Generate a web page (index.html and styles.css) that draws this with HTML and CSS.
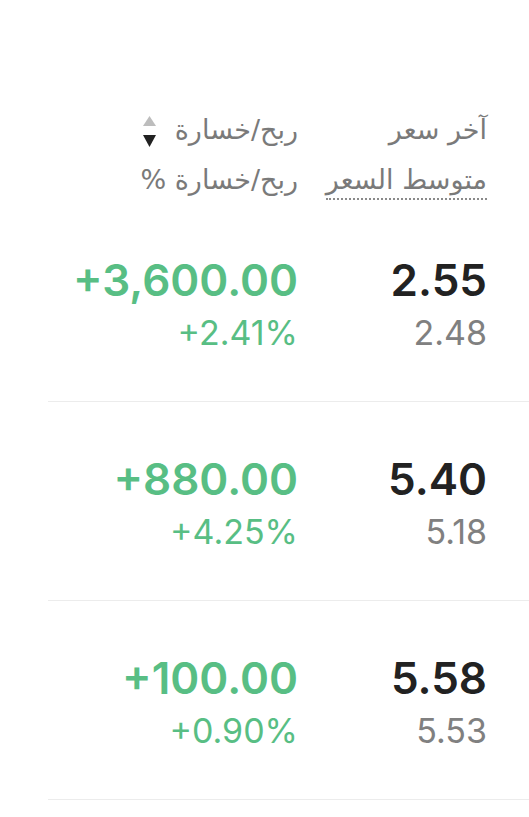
FILE: index.html
```html
<!DOCTYPE html>
<html lang="ar" dir="rtl">
<head>
    <meta charset="UTF-8">
    <meta name="viewport" content="width=device-width, initial-scale=1.0">
    <title>المحفظة</title>
    <link rel="stylesheet" href="styles.css">
</head>
<body>
    <div class="holdings">
        <div class="head">
            <div class="col price-col">
                <div class="label">آخر سعر</div>
                <div class="label"><span class="dotted">متوسط السعر</span></div>
            </div>
            <div class="col pl-col">
                <div class="label">
                    ربح/خسارة
                    <span class="sort">
                        <svg width="13" height="32" viewBox="0 0 13 32">
                            <path d="M6.5 0 L13 10 L0 10 Z" fill="#bdbdbd"/>
                            <path d="M0 19 L13 19 L6.5 31 Z" fill="#222"/>
                        </svg>
                    </span>
                </div>
                <div class="label">ربح/خسارة %</div>
            </div>
        </div>

        <div class="row">
            <div class="col price-col">
                <div class="big">2.55</div>
                <div class="small">2.48</div>
            </div>
            <div class="col pl-col up">
                <div class="big">+3,600.00</div>
                <div class="small">+2.41%</div>
            </div>
        </div>

        <div class="row">
            <div class="col price-col">
                <div class="big">5.40</div>
                <div class="small">5.18</div>
            </div>
            <div class="col pl-col up">
                <div class="big">+880.00</div>
                <div class="small">+4.25%</div>
            </div>
        </div>

        <div class="row">
            <div class="col price-col">
                <div class="big">5.58</div>
                <div class="small">5.53</div>
            </div>
            <div class="col pl-col up">
                <div class="big">+100.00</div>
                <div class="small">+0.90%</div>
            </div>
        </div>
    </div>
</body>
</html>
```

FILE: styles.css
```css
body {
    margin: 0;
    background: #fff;
    font-family: Inter, "DejaVu Sans", sans-serif;
}
.holdings {
    margin-left: 48px;
}
.head,
.row {
    display: grid;
    grid-template-columns: 189px 1fr;
    padding-right: 42px;
}
.head {
    padding-top: 105px;
    height: 98px;
}
.col {
    text-align: right;
}
.label {
    font-family: "DejaVu Sans", sans-serif;
    font-size: 27px;
    line-height: 50px;
    color: #7a7a7a;
    white-space: nowrap;
}
.dotted {
    border-bottom: 2px dotted #8a8a8a;
    padding-bottom: 3px;
}
.sort {
    display: inline-block;
    vertical-align: middle;
    margin-right: 10px;
}
.sort svg {
    display: block;
}
.row {
    height: 198px;
    border-bottom: 1px solid #ececec;
}
.big,
.small {
    direction: ltr;
    text-align: right;
}
.big {
    padding-top: 52px;
    font-size: 44px;
    font-weight: 600;
    line-height: 50px;
    color: #222;
}
.small {
    font-size: 34px;
    line-height: 56px;
    color: #808080;
}
.up .big,
.up .small {
    color: #58be84;
}
```
